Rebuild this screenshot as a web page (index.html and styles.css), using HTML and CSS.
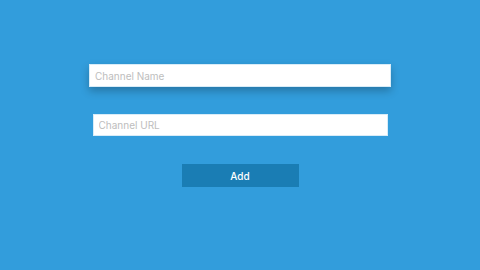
FILE: index.html
```html
<!DOCTYPE html>
<html lang="en">
  <head>
    <meta charset="UTF-8" />
    <meta name="viewport" content="width=device-width, initial-scale=1.0" />
    <title>Add Channel</title>
    <link rel="stylesheet" href="styles.css">
  </head>
  <body>
    <form class="channel-form">
      <input class="field focused" type="text" placeholder="Channel Name" />
      <input class="field" type="text" placeholder="Channel URL" />
      <button class="add-button" type="button">Add</button>
    </form>
  </body>
</html>
```

FILE: styles.css
```css
body {
  font-family: Inter, "Noto Sans", sans-serif;
  margin: 0;
  padding: 0;
  width: 480px;
  height: 270px;
  background-color: #329ddc;
  overflow: hidden;
}

.channel-form {
  display: flex;
  flex-direction: column;
  align-items: center;
  padding-top: 64px;
}

.field {
  box-sizing: border-box;
  width: 295px;
  height: 22px;
  margin: 0;
  padding: 0 5px;
  border: 1px solid #d8ecf8;
  background-color: white;
  font-family: inherit;
  font-size: 10px;
  color: #333;
  outline: none;
}

.field::placeholder {
  color: #bdbdbd;
}

.field.focused {
  width: 302px;
  height: 23px;
  margin-bottom: 27px;
  box-shadow: 0 4px 8px rgba(0, 0, 0, 0.25);
}

.add-button {
  box-sizing: border-box;
  width: 117px;
  height: 23px;
  margin-top: 28px;
  border: none;
  background-color: #1a7db4;
  color: white;
  font-family: inherit;
  font-size: 10px;
  font-weight: 500;
}
```
